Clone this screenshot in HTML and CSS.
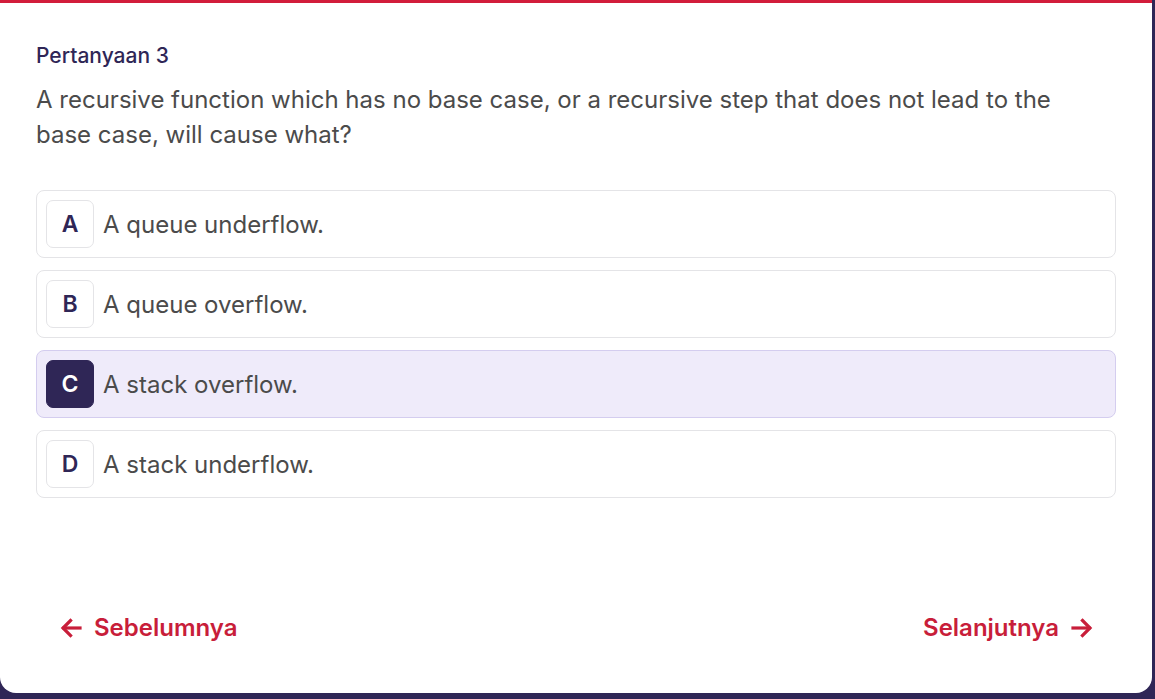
FILE: index.html
```html
<!DOCTYPE html>
<html lang="id">
<head>
<meta charset="utf-8">
<title>Pertanyaan 3</title>
<link rel="stylesheet" href="styles.css">
</head>
<body>
<div class="card">
  <div class="content">
    <div class="label">Pertanyaan 3</div>
    <p class="question">A recursive function which has no base case, or a recursive step that does not lead to the base case, will cause what?</p>
    <div class="options">
      <div class="option"><span class="key">A</span><span class="text">A queue underflow.</span></div>
      <div class="option"><span class="key">B</span><span class="text">A queue overflow.</span></div>
      <div class="option selected"><span class="key">C</span><span class="text">A stack overflow.</span></div>
      <div class="option"><span class="key">D</span><span class="text">A stack underflow.</span></div>
    </div>
  </div>
  <div class="nav">
    <a class="nav-btn prev" href="#">
      <svg width="22" height="22" viewBox="0 0 22 22" fill="none" stroke="currentColor" stroke-width="3.2" stroke-linecap="square" stroke-linejoin="miter"><path d="M20 11H4"/><path d="M10.5 3.5L3 11l7.5 7.5"/></svg>
      <span>Sebelumnya</span>
    </a>
    <a class="nav-btn next" href="#">
      <span>Selanjutnya</span>
      <svg width="22" height="22" viewBox="0 0 22 22" fill="none" stroke="currentColor" stroke-width="3.2" stroke-linecap="square" stroke-linejoin="miter"><path d="M2 11h16"/><path d="M11.5 3.5L19 11l-7.5 7.5"/></svg>
    </a>
  </div>
</div>
</body>
</html>
```
FILE: styles.css
```css
html, body {
  margin: 0;
  padding: 0;
}
body {
  background: #2f2656;
  font-family: Inter, "Noto Sans", sans-serif;
  width: 1155px;
  height: 699px;
  overflow: hidden;
}
.card {
  box-sizing: border-box;
  width: 1152px;
  height: 693px;
  background: #ffffff;
  border-top: 3px solid #d21d3b;
  border-radius: 0 0 16px 16px;
  display: flex;
  flex-direction: column;
  justify-content: space-between;
  padding: 0 36px 50px 36px;
}
.label {
  margin-top: 41px;
  font-size: 21px;
  font-weight: 500;
  color: #2f2656;
  line-height: 24px;
}
.question {
  margin: 14px 0 0 0;
  padding-right: 40px;
  font-size: 24px;
  line-height: 35px;
  color: #4b4b4b;
  font-weight: 400;
}
.options {
  margin-top: 38px;
  display: flex;
  flex-direction: column;
  gap: 12px;
}
.option {
  box-sizing: border-box;
  height: 68px;
  border: 1px solid #e4e4e7;
  border-radius: 8px;
  padding: 9px;
  display: flex;
  align-items: center;
  gap: 9px;
}
.option.selected {
  background: #efebfa;
  border-color: #d4cdef;
}
.key {
  box-sizing: border-box;
  width: 48px;
  height: 48px;
  border: 1px solid #e4e4e7;
  border-radius: 7px;
  display: flex;
  align-items: center;
  justify-content: center;
  font-size: 23px;
  font-weight: 600;
  color: #2f2656;
  background: #ffffff;
}
.selected .key {
  background: #2f2656;
  border-color: #2f2656;
  color: #ffffff;
}
.text {
  font-size: 24px;
  color: #4b4b4b;
}
.nav {
  display: flex;
  justify-content: space-between;
  padding: 0 23px 0 24px;
}
.nav-btn {
  display: flex;
  align-items: center;
  gap: 12px;
  color: #c81e3a;
  text-decoration: none;
  font-size: 24px;
  font-weight: 600;
  line-height: 30px;
}
```
